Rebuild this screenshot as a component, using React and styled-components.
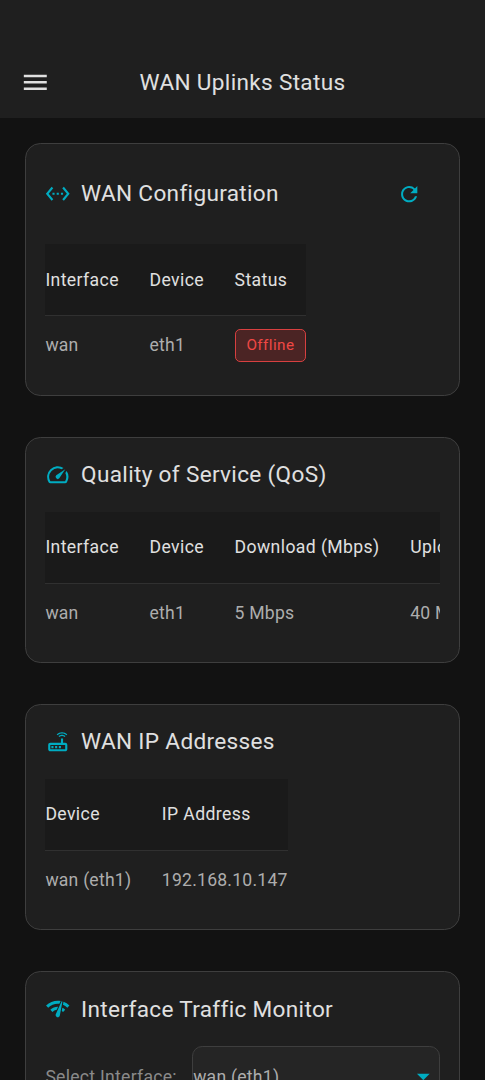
import React from "react";
import styled, { createGlobalStyle } from "styled-components";
import {
  MdArrowDropDown,
  MdMenu,
  MdNetworkCheck,
  MdOutlineRouter,
  MdOutlineSpeed,
  MdRefresh,
  MdSettingsEthernet,
} from "react-icons/md";

const GlobalStyle = createGlobalStyle`
  * { box-sizing: border-box; }
  body {
    margin: 0;
    background: #121212;
    font-family: Roboto, "Liberation Sans", sans-serif;
    color: #e0e0e0;
  }
`;

const Screen = styled.div`
  height: 1080px;
  overflow: hidden;
  background: #121212;
`;

const AppBar = styled.header`
  height: 118px;
  padding: 47px 20px 0;
  display: grid;
  grid-template-columns: 31px 1fr 31px;
  align-items: center;
  background: #1f1f1f;
`;

const MenuButton = styled.button`
  display: flex;
  padding: 0;
  border: 0;
  background: none;
  color: #e0e0e0;
  font-size: 30.6px;
`;

const PageTitle = styled.h1`
  margin: 0;
  padding-top: 1px;
  text-align: center;
  font-size: 22.6px;
  font-weight: 400;
  letter-spacing: 0.32px;
  line-height: 30px;
`;

const CardList = styled.main`
  display: flex;
  flex-direction: column;
  gap: 40.8px;
  padding: 25.2px 25.2px 0;
`;

const Card = styled.section`
  padding: 19.2px 19.2px 18.6px;
  border: 1px solid #3e3e3e;
  border-radius: 15.3px;
  background: #1f1f1f;
`;

const CardHeader = styled.div`
  display: flex;
  align-items: center;
  height: ${(p) => (p.$tall ? "61.2px" : "35.2px")};
  margin-bottom: 19.6px;
`;

const CardIcon = styled.span`
  display: flex;
  margin-right: 10.2px;
  color: #00acc1;
  font-size: 25.5px;
`;

const CardTitle = styled.h2`
  flex: 1;
  margin: 0;
  padding-top: 1px;
  font-size: 22.6px;
  font-weight: 400;
  letter-spacing: 0.32px;
  line-height: 26px;
  white-space: nowrap;
`;

const RefreshButton = styled.button`
  display: flex;
  align-items: center;
  justify-content: center;
  width: 61.2px;
  height: 61.2px;
  padding: 0;
  border: 0;
  background: none;
  color: #00acc1;
  font-size: 24.4px;
`;

const TableScroller = styled.div`
  overflow: hidden;
`;

const Table = styled.table`
  border-collapse: separate;
  border-spacing: 0;
  white-space: nowrap;
`;

const HeadCell = styled.th`
  height: 72px;
  padding: 0 30.6px 0 0;
  border-bottom: 1px solid #303030;
  background: #1a1a1a;
  text-align: left;
  font-size: 17.6px;
  font-weight: 400;
  letter-spacing: 0.4px;
  &:last-child { padding-right: 0; }
`;

const Cell = styled.td`
  height: 60px;
  padding: 0 30.6px 2px 0;
  color: #adadad;
  font-size: 17.6px;
  font-weight: 400;
  letter-spacing: 0.22px;
  &:last-child { padding-right: 0; }
`;

const StatusBadge = styled.span`
  display: flex;
  align-items: center;
  height: 33px;
  padding: 0 10.8px;
  border: 1.3px solid #d84040;
  border-radius: 5.1px;
  background: #4b2424;
  color: #f04844;
  font-size: 15.3px;
  font-weight: 400;
  letter-spacing: 0.42px;
`;

const SelectRow = styled.div`
  display: flex;
  align-items: center;
  gap: 15.3px;
`;

const SelectLabel = styled.span`
  color: #8a8a8a;
  font-size: 17.6px;
  font-weight: 400;
  letter-spacing: 0.27px;
  white-space: nowrap;
`;

const Select = styled.div`
  flex: 1;
  display: flex;
  align-items: center;
  justify-content: space-between;
  height: 61px;
  border: 1px solid #3e3e3e;
  border-radius: 10.2px;
  background: #252525;
  color: #adadad;
  font-size: 17.6px;
  font-weight: 400;
  letter-spacing: 0.25px;
  svg { color: #00acc1; font-size: 30.6px; }
`;

function DataTable({ columns, rows }) {
  return (
    <TableScroller>
      <Table>
        <thead>
          <tr>{columns.map((c) => <HeadCell key={c}>{c}</HeadCell>)}</tr>
        </thead>
        <tbody>
          {rows.map((row, r) => (
            <tr key={r}>{row.map((value, i) => <Cell key={i}>{value}</Cell>)}</tr>
          ))}
        </tbody>
      </Table>
    </TableScroller>
  );
}

function Panel({ icon, title, action, children }) {
  return (
    <Card>
      <CardHeader $tall={Boolean(action)}>
        <CardIcon>{icon}</CardIcon>
        <CardTitle>{title}</CardTitle>
        {action}
      </CardHeader>
      {children}
    </Card>
  );
}

export default function App() {
  return (
    <Screen>
      <GlobalStyle />
      <AppBar>
        <MenuButton aria-label="Menu"><MdMenu /></MenuButton>
        <PageTitle>WAN Uplinks Status</PageTitle>
      </AppBar>
      <CardList>
        <Panel
          icon={<MdSettingsEthernet />}
          title="WAN Configuration"
          action={<RefreshButton aria-label="Refresh"><MdRefresh /></RefreshButton>}
        >
          <DataTable
            columns={["Interface", "Device", "Status"]}
            rows={[["wan", "eth1", <StatusBadge key="s">Offline</StatusBadge>]]}
          />
        </Panel>
        <Panel icon={<MdOutlineSpeed />} title="Quality of Service (QoS)">
          <DataTable
            columns={["Interface", "Device", "Download (Mbps)", "Upload (Mbps)"]}
            rows={[["wan", "eth1", "5 Mbps", "40 Mbps"]]}
          />
        </Panel>
        <Panel icon={<MdOutlineRouter />} title="WAN IP Addresses">
          <DataTable
            columns={["Device", "IP Address"]}
            rows={[["wan (eth1)", "192.168.10.147"]]}
          />
        </Panel>
        <Panel icon={<MdNetworkCheck />} title="Interface Traffic Monitor">
          <SelectRow>
            <SelectLabel>Select Interface:</SelectLabel>
            <Select>wan (eth1)<MdArrowDropDown /></Select>
          </SelectRow>
        </Panel>
      </CardList>
    </Screen>
  );
}
